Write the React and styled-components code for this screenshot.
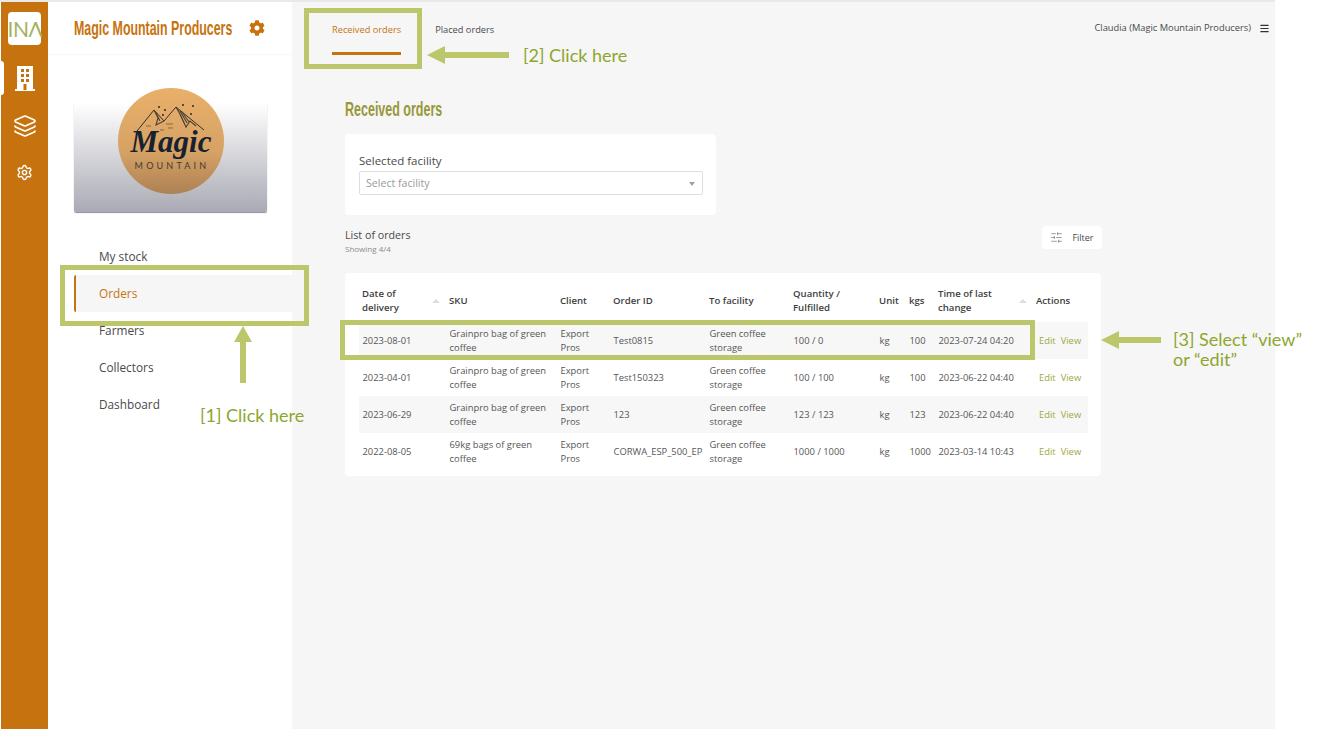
import styled, { createGlobalStyle } from "styled-components";
import { FaCog } from "react-icons/fa";
import { Settings, Menu, Layers, SlidersHorizontal } from "lucide-react";

const GlobalStyle = createGlobalStyle`
  html, body {
    margin: 0;
    padding: 0;
    background: #ffffff;
    font-family: "Open Sans", "Liberation Sans", sans-serif;
    color: #4a4a4a;
  }
  * { box-sizing: border-box; }
`;

const Page = styled.div`
  position: relative;
  width: 1325px;
  height: 729px;
  overflow: hidden;
`;
const Frame = styled.div`
  display: flex;
  width: 1275px;
  height: 729px;
  padding-left: 1px;
  border-top: 2px solid #e9e9e9;
`;
const Rail = styled.nav`
  width: 47px;
  flex: none;
  background: #c6730f;
  display: flex;
  flex-direction: column;
  align-items: center;
`;
const InaLogo = styled.div`
  width: 33px;
  height: 33px;
  margin-top: 10px;
  margin-left: -1px;
  background: #ffffff;
  border-radius: 4px;
  color: #a4b35f;
  font: 400 21px/33px Lato, sans-serif;
  text-align: center;
  letter-spacing: -0.5px;
`;
const RailItem = styled.div`
  position: relative;
  width: 47px;
  height: 47px;
  display: flex;
  align-items: center;
  justify-content: center;
  color: #ffffff;
  ${(p) =>
    p.$active &&
    `
    &::before {
      content: "";
      position: absolute;
      left: 0;
      top: 6px;
      width: 3px;
      height: 34px;
      background: #ffffff;
      border-radius: 0 3px 3px 0;
    }
  `}
`;
const RailItems = styled.div`
  margin-top: 10px;
  display: flex;
  flex-direction: column;
`;
const Sidebar = styled.aside`
  width: 244px;
  flex: none;
  background: #ffffff;
`;
const BrandBar = styled.div`
  height: 53px;
  padding: 0 0 0 26px;
  display: flex;
  align-items: center;
  gap: 16px;
  border-bottom: 1px solid #f7f7f7;
  color: #c6730f;
`;
const NarrowTitle = styled.h1`
  width: 159px;
  margin: 0;
  font: 700 21px/24px "Liberation Sans", sans-serif;
  color: inherit;
  white-space: nowrap;
  transform: scaleX(0.59);
  transform-origin: left center;
`;
const LogoCard = styled.div`
  width: 193px;
  height: 109px;
  margin: 48px 0 0 26px;
  border-radius: 2px;
  background: linear-gradient(#ffffff, #a9aab4);
  box-shadow: 0 1px 1px #8d8e9a;
  display: flex;
  justify-content: center;
  align-items: flex-start;
`;
const LogoCircle = styled.svg`
  width: 106px;
  height: 106px;
  margin-top: -15px;
  flex: none;
`;
const NavList = styled.ul`
  list-style: none;
  margin: 26px 0 0 26px;
  padding: 0;
`;
const NavItem = styled.li`
  height: 37px;
  padding-left: 23px;
  font-size: 11.8px;
  line-height: 37px;
  color: ${(p) => (p.$active ? "#c6730f" : "#4a4a4a")};
  background: ${(p) => (p.$active ? "#f6f6f6" : "transparent")};
  border-left: 2px solid ${(p) => (p.$active ? "#c6730f" : "transparent")};
  border-radius: ${(p) => (p.$active ? "2px 0 0 2px" : "0")};
`;
const Main = styled.main`
  flex: 1;
  background: #f6f6f6;
`;
const TopBar = styled.header`
  height: 53px;
  display: flex;
  align-items: flex-start;
  padding-left: 40px;
`;
const Tab = styled.div`
  height: 53px;
  margin-right: 34px;
  padding-top: 20px;
  font-size: 9.25px;
  line-height: 16px;
  white-space: nowrap;
  color: ${(p) => (p.$active ? "#c6730f" : "#4a4a4a")};
  border-bottom: 3px solid ${(p) => (p.$active ? "#c6730f" : "transparent")};
`;
const UserBox = styled.div`
  margin-left: auto;
  margin-right: 5px;
  padding-top: 18px;
  display: flex;
  align-items: center;
  gap: 8px;
  font-size: 9.3px;
  line-height: 16px;
  color: #4a4a4a;
`;
const Content = styled.div`
  width: 757px;
  margin-left: 53px;
`;
const PageTitle = styled.h2`
  margin: 42px 0 0;
  height: 24px;
  font: 700 20px/24px "Liberation Sans", sans-serif;
  color: #98983a;
  white-space: nowrap;
  transform: scaleX(0.625);
  transform-origin: left center;
`;
const FacilityCard = styled.section`
  width: 371px;
  height: 81px;
  margin-top: 13px;
  padding: 18px 13px 0 14px;
  background: #ffffff;
  border-radius: 4px;
`;
const FieldLabel = styled.div`
  font-size: 11.5px;
  line-height: 17px;
  color: #4a4a4a;
`;
const SelectBox = styled.div`
  height: 24px;
  margin-top: 2px;
  padding: 0 7px 1px 6px;
  display: flex;
  align-items: center;
  justify-content: space-between;
  border: 1px solid #dedede;
  border-radius: 2px;
  font-size: 10.6px;
  color: #9a9a9a;
  &::after {
    content: "";
    margin-top: 2px;
    border-left: 3px solid transparent;
    border-right: 3px solid transparent;
    border-top: 4px solid #a0a0a0;
  }
`;
const ListHead = styled.div`
  margin-top: 11px;
  height: 47px;
  display: flex;
  justify-content: space-between;
  align-items: flex-start;
`;
const ListTitle = styled.div`
  font-size: 10.7px;
  line-height: 18px;
  color: #4a4a4a;
`;
const ListCount = styled.div`
  font-size: 8px;
  line-height: 10px;
  color: #8a8a8a;
`;
const FilterButton = styled.div`
  width: 60px;
  height: 23px;
  display: flex;
  align-items: center;
  justify-content: center;
  gap: 9px;
  background: #ffffff;
  border-radius: 4px;
  font-size: 9px;
  color: #4a4a4a;
`;
const TableCard = styled.section`
  width: 756px;
  height: 203px;
  padding: 12px 13px 0 14px;
  background: #ffffff;
  border-radius: 4px;
`;
const Table = styled.table`
  width: 729px;
  table-layout: fixed;
  border-collapse: collapse;
  font-size: 9.4px;
`;
const Th = styled.th`
  height: 37px;
  padding: 0 3px 5px;
  text-align: left;
  font-size: 9.6px;
  line-height: 14.5px;
  font-weight: 600;
  color: #3e3e3e;
  white-space: pre-line;
`;
const SortHead = styled.div`
  display: flex;
  align-items: center;
  justify-content: space-between;
  &::after {
    content: "";
    margin-right: 3px;
    border-left: 4px solid transparent;
    border-right: 4px solid transparent;
    border-bottom: 4px solid #dddddd;
  }
`;
const Row = styled.tr`
  background: ${(p) => (p.$striped ? "#f7f7f7" : "transparent")};
`;
const Td = styled.td`
  height: 37px;
  padding: 0 3.5px;
  line-height: 14px;
  color: #565656;
  white-space: ${(p) => (p.$nowrap ? "nowrap" : "normal")};
`;
const ActionCell = styled(Td)`
  padding-left: 6px;
  white-space: nowrap;
`;
const ActionLink = styled.span`
  color: #a3a83f;
  margin-right: 5px;
`;

// tutorial overlay that sits over the screenshot
const Callout = styled.div`
  position: absolute;
  left: ${(p) => p.$x}px;
  top: ${(p) => p.$y}px;
  width: ${(p) => p.$w}px;
  height: ${(p) => p.$h}px;
  border: 5px solid #bcc76c;
`;
const Note = styled.div`
  position: absolute;
  left: ${(p) => p.$x}px;
  top: ${(p) => p.$y}px;
  font: 400 18px/20px Lato, sans-serif;
  color: #8ea62f;
  white-space: nowrap;
`;
const ArrowSvg = styled.svg`
  position: absolute;
  left: ${(p) => p.$x}px;
  top: ${(p) => p.$y}px;
`;

const columns = [87, 111, 53, 96, 84, 86, 30, 29, 98, 55];

const orders = [
  { date: "2023-08-01", sku: "Grainpro bag of green coffee", id: "Test0815", qty: "100 / 0", kgs: "100", time: "2023-07-24 04:20" },
  { date: "2023-04-01", sku: "Grainpro bag of green coffee", id: "Test150323", qty: "100 / 100", kgs: "100", time: "2023-06-22 04:40" },
  { date: "2023-06-29", sku: "Grainpro bag of green coffee", id: "123", qty: "123 / 123", kgs: "123", time: "2023-06-22 04:40" },
  { date: "2022-08-05", sku: "69kg bags of green coffee", id: "CORWA_ESP_500_EP", qty: "1000 / 1000", kgs: "1000", time: "2023-03-14 10:43" },
];

const BuildingIcon = () => (
  <svg width="20" height="25" viewBox="0 0 20 25">
    <rect x="2" y="0" width="16" height="24" fill="#fff" />
    <rect x="0" y="23" width="20" height="2" fill="#fff" />
    {[3, 8, 13].map((y) =>
      [6, 11].map((x) => <rect key={x + "-" + y} x={x} y={y} width="3" height="3" fill="#c6730f" />)
    )}
    <rect x="8.5" y="18" width="3" height="6" fill="#c6730f" />
  </svg>
);

const MagicLogo = () => (
  <LogoCircle viewBox="0 0 106 106">
    <defs>
      <linearGradient id="disc" x1="0" y1="0" x2="0" y2="1">
        <stop offset="0" stopColor="#e9b06a" />
        <stop offset="0.6" stopColor="#d6a265" />
        <stop offset="1" stopColor="#ad8154" />
      </linearGradient>
    </defs>
    <circle cx="53" cy="53" r="53" fill="url(#disc)" />
    <path d="M19 43 L36 22 L46 33 L58 19 L86 42" fill="none" stroke="#33302c" strokeWidth="1" />
    <path d="M36 22 L40 30 L38 37 L46 33 M58 19 L63 28 L68 39 L72 33 L78 38 M60 22 L66 35 M62 23 L69 35 M38 25 L42 33 M64 24 L71 34" fill="none" stroke="#4a4035" strokeWidth="1.1" />
    <path d="M28 38 h5 M48 36 h7 M50 40 h5 M42 42 h4" stroke="#a67c4e" strokeWidth="1.4" />
    {[[41, 19], [47, 22], [45, 27], [65, 17], [75, 18], [73, 26]].map(([cx, cy]) => (
      <circle key={cx} cx={cx} cy={cy} r="1" fill="#2b2a2a" />
    ))}
    <text x="53" y="64" textAnchor="middle" fontFamily="Liberation Serif, serif" fontStyle="italic" fontWeight="700" fontSize="31" fill="#18222e">Magic</text>
    <text x="54" y="81" textAnchor="middle" fontFamily="Lato, sans-serif" fontSize="9" letterSpacing="3.2" fill="#3f3a33">MOUNTAIN</text>
  </LogoCircle>
);

const Arrow = ({ x, y, w, h, points }) => (
  <ArrowSvg $x={x} $y={y} width={w} height={h}>
    <polygon points={points} fill="#bcc76c" />
  </ArrowSvg>
);

const App = () => {
  return (
    <Page>
      <GlobalStyle />
      <Frame>
        <Rail>
          <InaLogo>INΛ</InaLogo>
          <RailItems>
            <RailItem $active>
              <BuildingIcon />
            </RailItem>
            <RailItem>
              <Layers size={24} strokeWidth={1.7} />
            </RailItem>
            <RailItem>
              <Settings size={17} strokeWidth={2} />
            </RailItem>
          </RailItems>
        </Rail>
        <Sidebar>
          <BrandBar>
            <NarrowTitle>Magic Mountain Producers</NarrowTitle>
            <FaCog size={16} />
          </BrandBar>
          <LogoCard>
            <MagicLogo />
          </LogoCard>
          <NavList>
            <NavItem>My stock</NavItem>
            <NavItem $active>Orders</NavItem>
            <NavItem>Farmers</NavItem>
            <NavItem>Collectors</NavItem>
            <NavItem>Dashboard</NavItem>
          </NavList>
        </Sidebar>
        <Main>
          <TopBar>
            <Tab $active>Received orders</Tab>
            <Tab>Placed orders</Tab>
            <UserBox>
              Claudia (Magic Mountain Producers)
              <Menu size={11} strokeWidth={2.6} color="#333333" />
            </UserBox>
          </TopBar>
          <Content>
            <PageTitle>Received orders</PageTitle>
            <FacilityCard>
              <FieldLabel>Selected facility</FieldLabel>
              <SelectBox>Select facility</SelectBox>
            </FacilityCard>
            <ListHead>
              <div>
                <ListTitle>List of orders</ListTitle>
                <ListCount>Showing 4/4</ListCount>
              </div>
              <FilterButton>
                <SlidersHorizontal size={13} strokeWidth={1} />
                Filter
              </FilterButton>
            </ListHead>
            <TableCard>
              <Table>
                <colgroup>
                  {columns.map((w, i) => (
                    <col key={i} style={{ width: w }} />
                  ))}
                </colgroup>
                <thead>
                  <tr>
                    <Th>
                      <SortHead>
                        <span>Date of<br />delivery</span>
                      </SortHead>
                    </Th>
                    <Th>SKU</Th>
                    <Th>Client</Th>
                    <Th>Order ID</Th>
                    <Th>To facility</Th>
                    <Th>Quantity /<br />Fulfilled</Th>
                    <Th>Unit</Th>
                    <Th>kgs</Th>
                    <Th>
                      <SortHead>
                        <span>Time of last<br />change</span>
                      </SortHead>
                    </Th>
                    <Th>Actions</Th>
                  </tr>
                </thead>
                <tbody>
                  {orders.map((o, i) => (
                    <Row key={o.date} $striped={i % 2 === 0}>
                      <Td>{o.date}</Td>
                      <Td>{o.sku}</Td>
                      <Td>Export Pros</Td>
                      <Td $nowrap>{o.id}</Td>
                      <Td>Green coffee storage</Td>
                      <Td>{o.qty}</Td>
                      <Td>kg</Td>
                      <Td>{o.kgs}</Td>
                      <Td $nowrap>{o.time}</Td>
                      <ActionCell>
                        <ActionLink>Edit</ActionLink>
                        <ActionLink>View</ActionLink>
                      </ActionCell>
                    </Row>
                  ))}
                </tbody>
              </Table>
            </TableCard>
          </Content>
        </Main>
      </Frame>

      <Callout $x={60} $y={265} $w={249} $h={61} />
      <Callout $x={304} $y={8} $w={118} $h={61} />
      <Callout $x={340} $y={320} $w={695} $h={40} />
      <Arrow x={234} y={326} w={18} h={57} points="9,0 18,16 12,16 12,57 6,57 6,16 0,16" />
      <Arrow x={427} y={46} w={82} h={18} points="0,9 18,0 18,6 82,6 82,12 18,12 18,18" />
      <Arrow x={1101} y={331} w={60} h={18} points="0,9 18,0 18,6 60,6 60,12 18,12 18,18" />
      <Note $x={200} $y={405}>[1] Click here</Note>
      <Note $x={523} $y={45}>[2] Click here</Note>
      <Note $x={1173} $y={329}>[3] Select “view”<br />or “edit”</Note>
    </Page>
  );
};

export default App;
